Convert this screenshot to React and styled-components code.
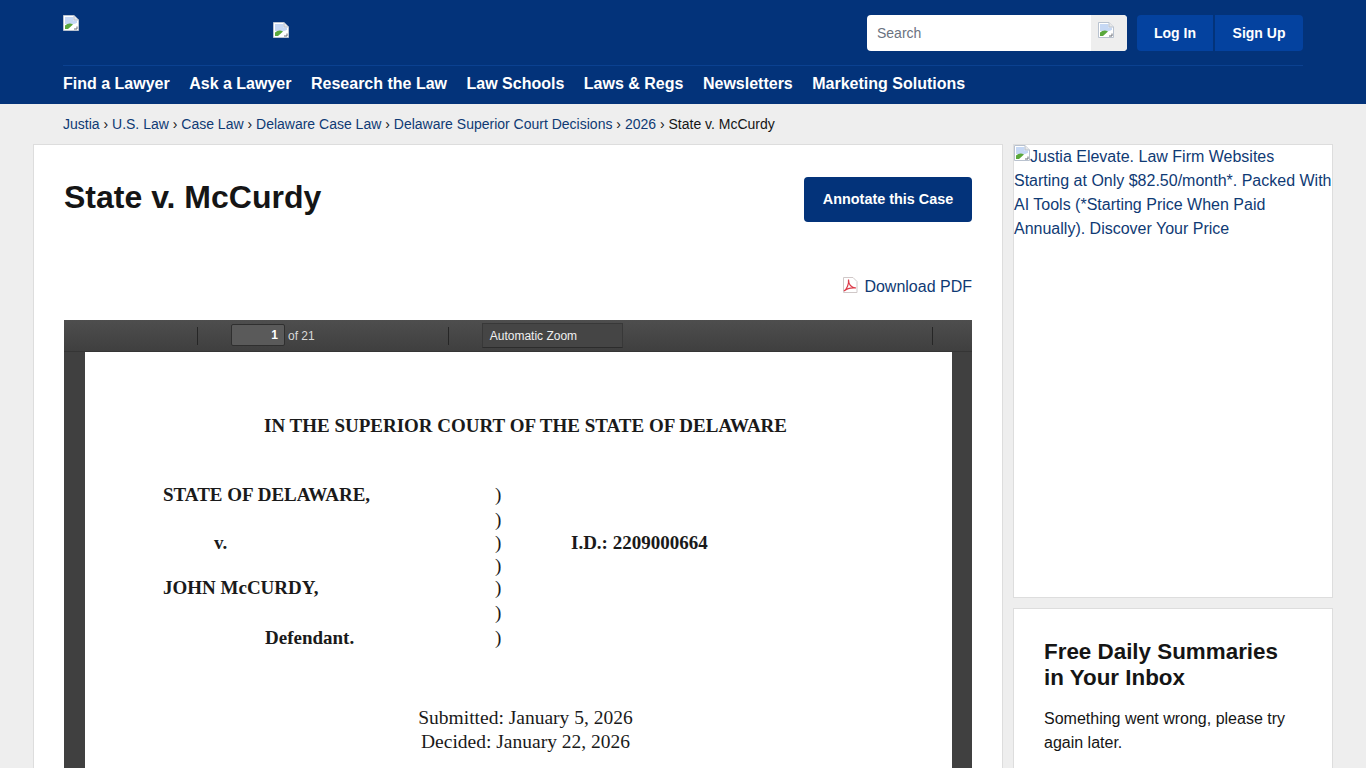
import React from 'react';
import styled, { createGlobalStyle } from 'styled-components';

const GlobalStyle = createGlobalStyle`
  html, body {
    margin: 0;
    padding: 0;
    height: 100%;
    overflow: hidden;
    background: #eeeeee;
    font-family: "Liberation Sans", Arial, sans-serif;
    font-size: 16px;
    color: #151515;
  }
  * { box-sizing: border-box; }
`;

const Page = styled.div`
  height: 768px;
  overflow: hidden;
`;

const Header = styled.header`
  height: 104px;
  background: #03337a;
  padding: 15px 63px 0;
`;

const TopRow = styled.div`
  display: flex;
  align-items: flex-start;
  height: 51px;
  width: 1240px;
  border-bottom: 1px solid #0b4190;
`;

const Logo = styled.div`
  width: ${({ $w }) => $w}px;
  padding-top: ${({ $top }) => $top}px;
  line-height: 0;
`;

const SearchBox = styled.div`
  margin-left: auto;
  width: 260px;
  height: 36px;
  display: flex;
  background: #fff;
  border-radius: 4px;
  overflow: hidden;
`;

const SearchInput = styled.div`
  flex: 1;
  padding-left: 10px;
  font-size: 14px;
  line-height: 36px;
  color: #6b7280;
`;

const SearchButton = styled.div`
  width: 36px;
  background: #eeeeee;
  padding: 7px 0 0 7px;
  line-height: 0;
`;

const AuthButton = styled.a`
  height: 36px;
  width: ${({ $w }) => $w}px;
  margin-left: ${({ $ml }) => $ml}px;
  background: #04429f;
  border-radius: ${({ $r }) => $r};
  color: #fff;
  font-size: 14px;
  font-weight: 700;
  line-height: 36px;
  text-align: center;
`;

const Nav = styled.nav`
  display: flex;
  gap: 19.5px;
  padding-top: 8px;
`;

const NavItem = styled.a`
  color: #fff;
  font-size: 16px;
  font-weight: 700;
  line-height: 20px;
`;

const Crumbs = styled.div`
  height: 40px;
  padding-left: 63px;
  font-size: 14px;
  line-height: 40px;
  color: #151515;
`;

const Crumb = styled.a`
  color: #0f3a74;
`;

const Columns = styled.div`
  display: flex;
  gap: 10px;
  padding-left: 33px;
`;

const Main = styled.main`
  width: 970px;
  height: 640px;
  background: #fff;
  border: 1px solid #dddddd;
  padding: 32px 30px 0;
`;

const TitleRow = styled.div`
  display: flex;
  justify-content: space-between;
  align-items: flex-start;
  height: 100px;
`;

const Title = styled.h1`
  margin: 0;
  font-size: 32px;
  line-height: 40px;
  font-weight: 700;
  color: #151515;
`;

const AnnotateButton = styled.a`
  width: 168px;
  height: 45px;
  background: #03337a;
  border-radius: 4px;
  color: #fff;
  font-size: 14.4px;
  font-weight: 700;
  line-height: 45px;
  text-align: center;
`;

const DownloadRow = styled.div`
  display: flex;
  justify-content: flex-end;
  align-items: flex-start;
  gap: 6px;
  height: 43px;
`;

const DownloadLink = styled.a`
  color: #0f3a74;
  font-size: 16px;
  line-height: 20px;
`;

const Viewer = styled.div`
  width: 908px;
  height: 500px;
  background: #404040;
`;

const Toolbar = styled.div`
  height: 32px;
  display: flex;
  align-items: center;
  background: linear-gradient(#4e4e4e, #3f3f3f);
  border-bottom: 1px solid #353535;
  color: #d9d9d9;
  font-size: 12px;
`;

const Separator = styled.i`
  width: 1px;
  height: 18px;
  margin-left: ${({ $ml }) => $ml}px;
  background: #262626;
`;

const PageInput = styled.div`
  width: 54px;
  height: 22px;
  margin: 0 3px 2px 33px;
  padding-right: 6px;
  background: #5a5a5a;
  border: 1px solid #2f2f2f;
  border-radius: 2px;
  color: #fff;
  font-weight: 700;
  line-height: 20px;
  text-align: right;
`;

const ZoomSelect = styled.div`
  width: 141px;
  height: 25px;
  margin-left: 33px;
  padding-left: 7px;
  background: #454545;
  border: 1px solid #383838;
  border-bottom-color: #2c2c2c;
  color: #f0f0f0;
  line-height: 24px;
`;

const Sheet = styled.div`
  width: 867px;
  height: 420px;
  margin-left: 21px;
  background: #fff;
  padding: 61px 0 0 78px;
  font-family: "Liberation Serif", "Times New Roman", serif;
  font-size: 19px;
  color: #1a1a1a;
`;

const CourtName = styled.div`
  margin-left: 101px;
  height: 70px;
  font-weight: 700;
  line-height: 26px;
`;

const CaptionRow = styled.div`
  display: grid;
  grid-template-columns: 332px 76px auto;
  height: ${({ $h }) => $h}px;
  font-weight: 700;
  line-height: 24px;
`;

const Party = styled.div`
  padding-left: ${({ $indent }) => $indent || 0}px;
`;

const Paren = styled.div`
  font-weight: 400;
`;

const Dates = styled.div`
  margin-top: 56px;
  width: 725px;
  text-align: center;
  line-height: 24px;
  font-size: 19.5px;
`;

const Sidebar = styled.aside`
  width: 320px;
  display: flex;
  flex-direction: column;
  gap: 10px;
`;

const AdBox = styled.a`
  display: block;
  height: 454px;
  background: #fff;
  border: 1px solid #dddddd;
  color: #0f3a74;
  font-size: 16px;
  line-height: 24px;
`;

const SignupCard = styled.div`
  height: 180px;
  background: #fff;
  border: 1px solid #dddddd;
  padding: 30px 30px 0;
`;

const SignupTitle = styled.h3`
  margin: 0 0 16px;
  font-size: 22.4px;
  line-height: 26px;
  font-weight: 700;
  color: #151515;
`;

const SignupText = styled.p`
  margin: 0;
  line-height: 24px;
`;

const InlineIcon = styled.svg`
  vertical-align: top;
`;

const BrokenImage = () => (
  <InlineIcon as="svg" width="16" height="16" viewBox="0 0 16 16">
    <path d="M0.5 0.5H11L15.5 5V15.5H0.5Z" fill="#fff" stroke="#b9c2cf" />
    <path d="M2 2H10.5V5.5H14V8L8 10L2 9Z" fill="#c6d8f4" />
    <path d="M2 14V10.5Q6 7 10 9.5L5 14Z" fill="#5aa83c" />
    <path d="M6.5 14L14 8V14Z" fill="#fff" />
    <path d="M11 0.5V5H15.5" fill="#e8e8e8" stroke="#b9c2cf" />
    <path d="M11 14H14V11.5" fill="none" stroke="#6b6f76" />
  </InlineIcon>
);

const PdfIcon = () => (
  <InlineIcon as="svg" width="16" height="16" viewBox="0 0 16 16">
    <path d="M1.5 0.5H11L15 4.5V15.5H1.5Z" fill="#fff" stroke="#d0c8c8" />
    <path d="M2 14C5 12 7 7 6.5 2.5C6.5 7 9 10.5 14 11C10 10.5 5 11.5 2 14Z" fill="none" stroke="#dc3a48" strokeWidth="1.2" />
  </InlineIcon>
);

const navItems = ['Find a Lawyer', 'Ask a Lawyer', 'Research the Law', 'Law Schools', 'Laws & Regs', 'Newsletters', 'Marketing Solutions'];
const crumbs = ['Justia', 'U.S. Law', 'Case Law', 'Delaware Case Law', 'Delaware Superior Court Decisions', '2026'];

const captionRows = [
  { h: 25, party: 'STATE OF DELAWARE,' },
  { h: 23 },
  { h: 23, party: 'v.', indent: 51, id: 'I.D.: 2209000664' },
  { h: 22 },
  { h: 25, party: 'JOHN McCURDY,' },
  { h: 25 },
  { h: 24, party: 'Defendant.', indent: 102 },
];

export default function App() {
  return (
    <Page>
      <GlobalStyle />
      <Header>
        <TopRow>
          <Logo $w={210}><BrokenImage /></Logo>
          <Logo $w={100} $top={7}><BrokenImage /></Logo>
          <SearchBox>
            <SearchInput>Search</SearchInput>
            <SearchButton><BrokenImage /></SearchButton>
          </SearchBox>
          <AuthButton $w={76} $ml={10} $r="4px 0 0 4px">Log In</AuthButton>
          <AuthButton $w={88} $ml={2} $r="0 4px 4px 0">Sign Up</AuthButton>
        </TopRow>
        <Nav>
          {navItems.map((item) => <NavItem key={item}>{item}</NavItem>)}
        </Nav>
      </Header>
      <Crumbs>
        {crumbs.map((c) => (
          <React.Fragment key={c}><Crumb>{c}</Crumb> › </React.Fragment>
        ))}
        State v. McCurdy
      </Crumbs>
      <Columns>
        <Main>
          <TitleRow>
            <Title>State v. McCurdy</Title>
            <AnnotateButton>Annotate this Case</AnnotateButton>
          </TitleRow>
          <DownloadRow>
            <PdfIcon />
            <DownloadLink>Download PDF</DownloadLink>
          </DownloadRow>
          <Viewer>
            <Toolbar>
              <Separator $ml={133} />
              <PageInput>1</PageInput>
              <span>of 21</span>
              <Separator $ml={133} />
              <ZoomSelect>Automatic Zoom</ZoomSelect>
              <Separator $ml={309} />
            </Toolbar>
            <Sheet>
              <CourtName>IN THE SUPERIOR COURT OF THE STATE OF DELAWARE</CourtName>
              {captionRows.map((row, i) => (
                <CaptionRow key={i} $h={row.h}>
                  <Party $indent={row.indent}>{row.party}</Party>
                  <Paren>)</Paren>
                  <div>{row.id}</div>
                </CaptionRow>
              ))}
              <Dates>
                <div>Submitted: January 5, 2026</div>
                <div>Decided: January 22, 2026</div>
              </Dates>
            </Sheet>
          </Viewer>
        </Main>
        <Sidebar>
          <AdBox>
            <BrokenImage />
            Justia Elevate. Law Firm Websites Starting at Only $82.50/month*. Packed With AI Tools (*Starting Price When Paid Annually). Discover Your Price
          </AdBox>
          <SignupCard>
            <SignupTitle>Free Daily Summaries in Your Inbox</SignupTitle>
            <SignupText>Something went wrong, please try again later.</SignupText>
          </SignupCard>
        </Sidebar>
      </Columns>
    </Page>
  );
}
